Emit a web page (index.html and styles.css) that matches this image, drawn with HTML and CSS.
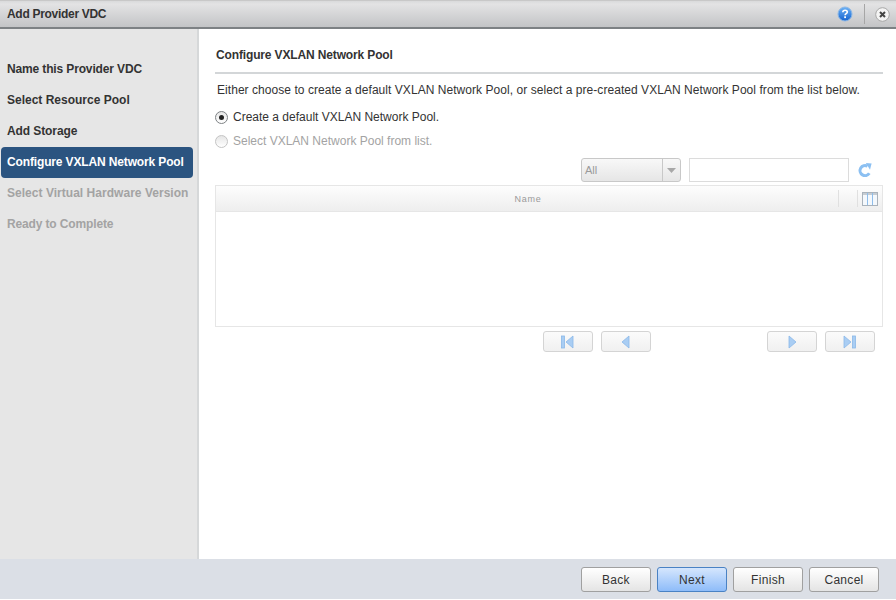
FILE: index.html
```html
<!DOCTYPE html>
<html lang="en">
<head>
<meta charset="utf-8">
<title>Add Provider VDC</title>
<link rel="stylesheet" href="styles.css">
</head>
<body>
<div class="dialog">
  <header class="titlebar">
    <span class="title">Add Provider VDC</span>
    <span class="title-tools">
      <svg class="ic-help" width="16" height="16" viewBox="0 0 16 16"><defs><linearGradient id="hg" x1="0" y1="0" x2="0" y2="1"><stop offset="0" stop-color="#6db2f5"/><stop offset="1" stop-color="#1463d0"/></linearGradient></defs><circle cx="8" cy="8" r="7" fill="url(#hg)" stroke="#8db8e6" stroke-width="1"/><path d="M5.800 6.200C5.900 4.800 6.900 4.200 8.100 4.200c1.300 0 2.200.7 2.200 1.800 0 1.700-2.200 1.600-2.200 3.200" fill="none" stroke="#fff" stroke-width="1.600"/><rect x="7.200" y="10.300" width="1.800" height="1.800" fill="#fff"/></svg>
      <span class="tool-sep"></span>
      <svg class="ic-close" width="15" height="15" viewBox="0 0 15 15"><circle cx="7.500" cy="7.500" r="6.800" fill="#f4f4f4" stroke="#a8a8a8"/><path d="M5 5l5 5M10 5l-5 5" stroke="#444" stroke-width="2"/></svg>
    </span>
  </header>
  <div class="main">
    <nav class="steps">
      <div class="step tight">Name this Provider VDC</div>
      <div class="step">Select Resource Pool</div>
      <div class="step slight">Add Storage</div>
      <div class="step tight active">Configure VXLAN Network Pool</div>
      <div class="step off wide">Select Virtual Hardware Version</div>
      <div class="step off tight">Ready to Complete</div>
    </nav>
    <section class="content">
      <h1 class="heading">Configure VXLAN Network Pool</h1>
      <p class="intro">Either choose to create a default VXLAN Network Pool, or select a pre-created VXLAN Network Pool from the list below.</p>
      <div class="radio-row"><span class="radio checked"></span><span>Create a default VXLAN Network Pool.</span></div>
      <div class="radio-row off"><span class="radio"></span><span>Select VXLAN Network Pool from list.</span></div>
      <div class="filters">
        <div class="combo"><span class="combo-val">All</span><span class="combo-btn"><svg width="9" height="5" viewBox="0 0 9 5"><path d="M0 0h9L4.500 5z" fill="#a8a8a8"/></svg></span></div>
        <div class="search"></div>
        <svg class="ic-refresh" width="16" height="16" viewBox="0 0 16 16"><path d="M12.300 11.200A5 5 0 1 1 10.500 4.200" fill="none" stroke="#8cc0f2" stroke-width="3"/><path d="M8.800 1l5.800 .6-1.600 6.200z" fill="#8cc0f2"/></svg>
      </div>
      <div class="grid">
        <div class="grid-head">
          <span class="col-name">Name</span>
          <span class="col-spare"></span>
          <span class="col-pick"><svg width="16" height="14" viewBox="0 0 16 14"><rect x=".5" y=".5" width="15" height="13" fill="#f4f8fc" stroke="#a9b2bb"/><rect x="1" y="1" width="14" height="2" fill="#c6ccd2"/><path d="M5.500 1v12M10.500 1v12" stroke="#8fbdea"/></svg></span>
        </div>
        <div class="grid-body"></div>
      </div>
      <div class="pager">
        <div class="pager-group">
          <span class="page-btn"><svg class="nudge" width="13" height="14" viewBox="0 0 13 14"><rect x=".5" y="1" width="3" height="12" fill="#a9cdf3" stroke="#8ab8e8" stroke-width=".8"/><path d="M12 1v12L5 7z" fill="#a9cdf3" stroke="#8ab8e8" stroke-width=".8"/></svg></span>
          <span class="page-btn"><svg class="nudge" width="9" height="14" viewBox="0 0 9 14"><path d="M8 1v12L1 7z" fill="#a9cdf3" stroke="#8ab8e8" stroke-width=".8"/></svg></span>
        </div>
        <div class="pager-group">
          <span class="page-btn"><svg width="9" height="14" viewBox="0 0 9 14"><path d="M1 1v12l7-6z" fill="#a9cdf3" stroke="#8ab8e8" stroke-width=".8"/></svg></span>
          <span class="page-btn"><svg class="nudge" width="13" height="14" viewBox="0 0 13 14"><path d="M1 1v12l7-6z" fill="#a9cdf3" stroke="#8ab8e8" stroke-width=".8"/><rect x="9.500" y="1" width="3" height="12" fill="#a9cdf3" stroke="#8ab8e8" stroke-width=".8"/></svg></span>
        </div>
      </div>
    </section>
  </div>
  <footer class="footer">
    <button class="btn">Back</button>
    <button class="btn primary">Next</button>
    <button class="btn">Finish</button>
    <button class="btn">Cancel</button>
  </footer>
</div>
</body>
</html>
```
FILE: styles.css
```css
* { box-sizing: border-box; }
html, body { margin: 0; padding: 0; }
body { width: 896px; height: 600px; overflow: hidden; background: #fff; font-family: "Liberation Sans", Arial, sans-serif; font-size: 12px; color: #333; }
.dialog { display: flex; flex-direction: column; height: 599px; background: #fff; }

.titlebar { height: 29px; flex: none; display: flex; align-items: center; justify-content: space-between; padding: 0 6px 0 7px; background: linear-gradient(#d9dadb, #e3e3e4 12%, #c3c4c6); border-bottom: 2px solid #7d8184; border-top: 1px solid #c8c8c8; }
.title { font-weight: bold; font-size: 12px; color: #333; letter-spacing: -.3px; }
.title-tools { display: flex; align-items: center; }
.ic-help { display: block; margin-right: 11px; }
.tool-sep { width: 1px; height: 20px; background: #a6a6a6; margin-right: 10px; }
.ic-close { display: block; }

.main { flex: 1; display: flex; min-height: 0; }
.steps { width: 199px; flex: none; background: #e6e6e6; border-right: 2px solid #d6d8d9; padding: 25px 0 0 1px; }
.step { width: 192px; height: 31px; line-height: 31px; padding-left: 6px; font-weight: bold; font-size: 12px; color: #333; border-radius: 4px; white-space: nowrap; }
.step.tight { letter-spacing: -.14px; }
.step.slight { letter-spacing: -.09px; }
.step.wide { letter-spacing: .03px; }
.step.active { background: #2b5480; color: #fff; }
.step.off { color: #a3a3a3; }

.content { flex: 1; min-width: 0; padding: 0 13px 0 16px; }
.heading { margin: 0; height: 45px; padding: 19px 0 0 1px; line-height: 15px; font-size: 12px; font-weight: bold; color: #333; letter-spacing: -.14px; border-bottom: 2px solid #d3d6d8; }
.intro { margin: 0; padding: 9px 0 0 2px; line-height: 15px; font-size: 12px; color: #333; white-space: nowrap; letter-spacing: .05px; }
.radio-row { display: flex; align-items: center; gap: 5px; height: 15px; margin-top: 12px; line-height: 15px; }
.radio-row + .radio-row { margin-top: 9px; }
.radio-row.off { color: #a3a3a3; }
.radio { position: relative; width: 13px; height: 13px; border-radius: 50%; border: 1px solid #7e8285; background: linear-gradient(#e6e6e6, #fff); }
.radio-row.off .radio { border-color: #c4c4c4; }
.radio.checked::after { content: ""; position: absolute; left: 3px; top: 3px; width: 5px; height: 5px; border-radius: 50%; background: #222; }

.filters { display: flex; align-items: center; height: 26px; margin-top: 8px; padding-left: 366px; }
.combo { width: 100px; height: 24px; display: flex; border: 1px solid #c8c8c8; border-radius: 3px; background: linear-gradient(#f8f8f8, #e6e6e6); }
.combo-val { flex: 1; padding-left: 3px; line-height: 22px; font-size: 11px; color: #9a9a9a; }
.combo-btn { width: 18px; display: flex; align-items: center; justify-content: center; border-left: 1px solid #c8c8c8; }
.search { width: 160px; height: 24px; margin-left: 8px; border: 1px solid #dcdcdc; background: #fff; }
.ic-refresh { display: block; margin-left: 8px; }

.grid { margin-top: 2px; width: 668px; border: 1px solid #e6e6e6; }
.grid-head { height: 26px; display: flex; align-items: center; background: linear-gradient(#fdfdfd, #eeeeee); border-bottom: 1px solid #e6e6e6; }
.col-name { flex: 1; text-align: center; font-size: 9px; letter-spacing: .8px; color: #9a9a9a; padding-left: 2px; }
.col-spare { width: 20px; height: 17px; border-left: 1px solid #e0e0e0; border-right: 1px solid #e0e0e0; }
.col-pick { width: 24px; display: flex; justify-content: center; }
.grid-body { height: 114px; background: #fff; }

.pager { display: flex; justify-content: space-between; margin-top: 4px; margin-left: 328px; width: 332px; }
.pager-group { display: flex; gap: 8px; }
.page-btn { width: 50px; height: 21px; display: flex; align-items: center; justify-content: center; border: 1px solid #d4d4d4; border-radius: 3px; background: linear-gradient(#fbfbfb, #f0f0f0); }
.nudge { margin-right: 2px; }

.footer { height: 40px; flex: none; display: flex; justify-content: flex-end; align-items: flex-start; gap: 6px; padding: 8px 17px 0 0; background: #dbdfe6; }
.btn { width: 70px; height: 25px; padding: 0; font: 12px "Liberation Sans", Arial, sans-serif; letter-spacing: .3px; color: #333; border: 1px solid #a0a0a0; border-radius: 3px; background: linear-gradient(#ffffff, #e4e4e4); }
.btn.primary { border: 1px solid #4a82c4; background: linear-gradient(#d5e6fd, #8ebcf9); }
```
